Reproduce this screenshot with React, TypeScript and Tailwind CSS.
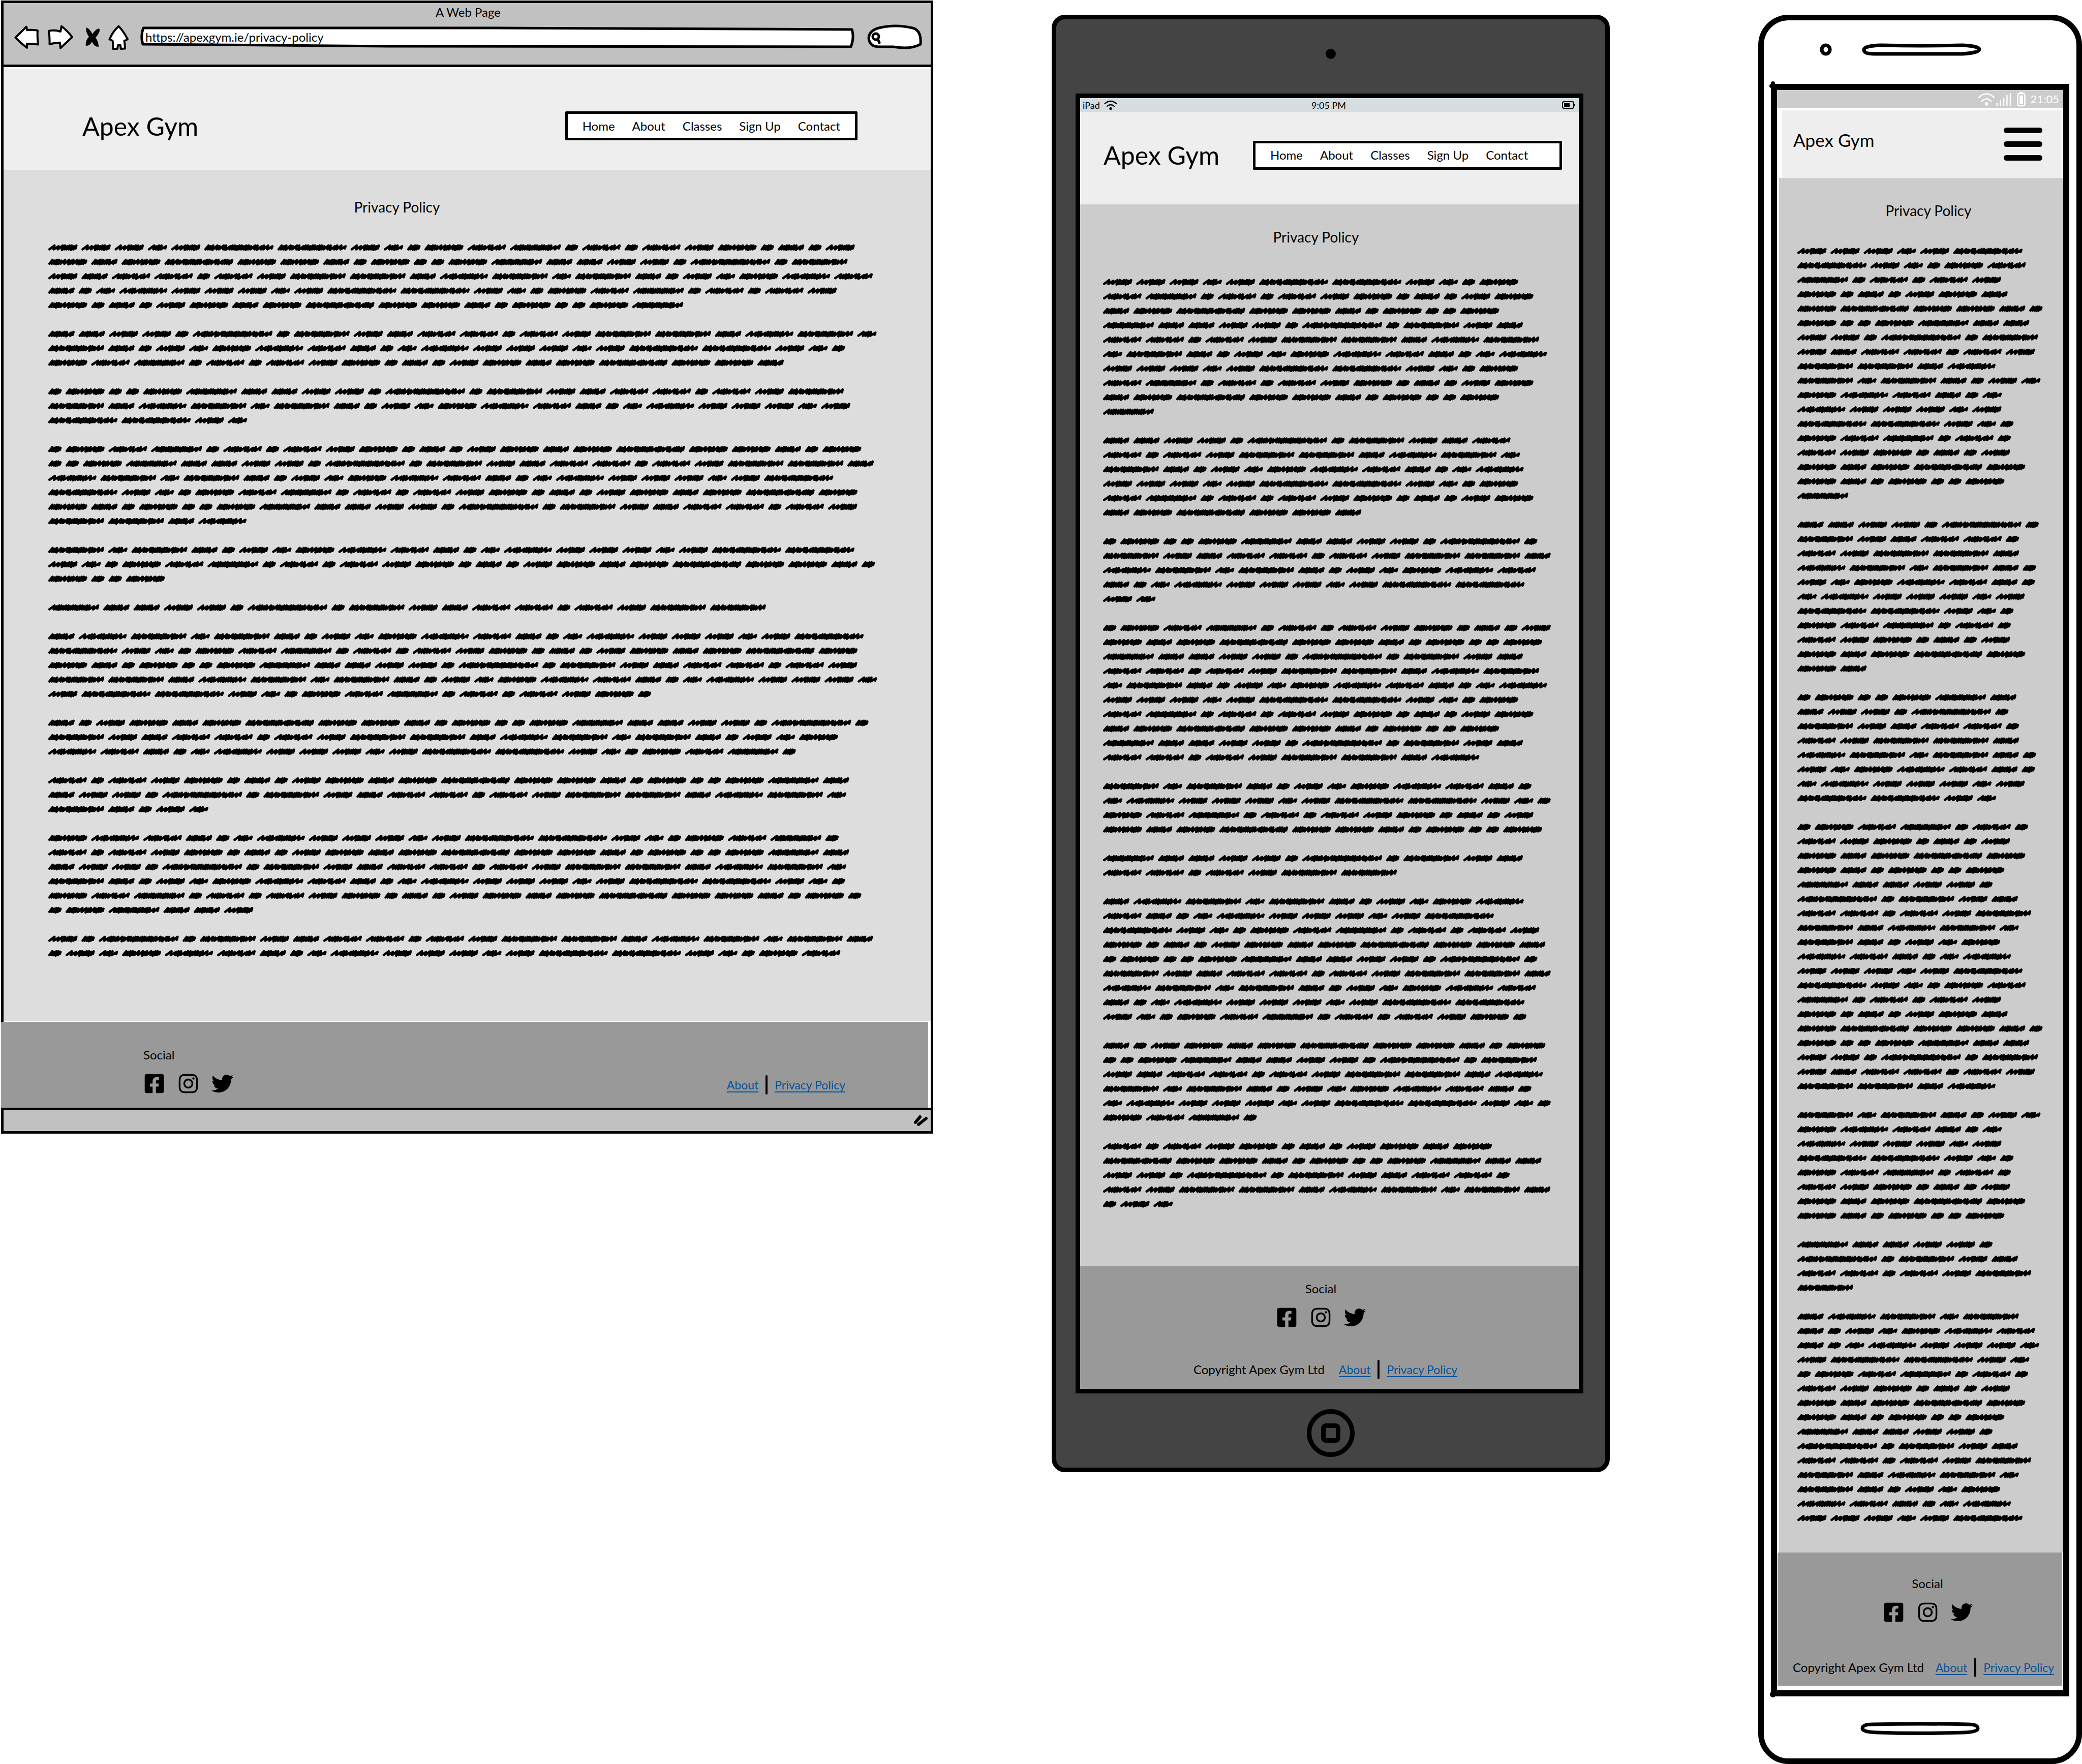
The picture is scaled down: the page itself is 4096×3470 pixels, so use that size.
import React from "react";
import { FaFacebookSquare, FaInstagram, FaTwitter } from "react-icons/fa";

const LOREM =
  "Lorem ipsum dolor sit amet, consectetur adipisicing elit, sed do eiusmod tempor incididunt ut labore et dolore magna aliqua. Ut enim ad minim veniam, quis nostrud exercitation ullamco laboris nisi ut aliquip ex ea commodo consequat. Duis aute irure dolor in reprehenderit in voluptate velit esse cillum dolore eu fugiat nulla pariatur. Excepteur sint occaecat cupidatat non proident, sunt in culpa qui officia deserunt mollit anim id est laborum.".split(
    " ",
  );

// Word index at which each paragraph of the repeated filler text ends.
const PARAGRAPH_ENDS = [105, 168, 216, 331, 380, 398, 503, 566, 614, 729, 771];

// Advance of a scribbled word, space included, by its number of characters.
const ADVANCE: Record<number, number> = {
  2: 38, 3: 51.1, 4: 66.5, 5: 72.8, 6: 93.3, 7: 94.2, 8: 114.3,
  9: 131.4, 10: 120.5, 11: 160.6, 12: 159.8, 13: 184,
};

// Rhythm of each scribble: "o" is a loose stroke, "d" a dense one.
const RHYTHM: Record<number, string> = {
  2: "ddddd",
  3: "odddo",
  4: "dddddddod",
  5: "ooodddddd",
  6: "oddddododo",
  7: "dddddooddodddd",
  8: "ooddodddddddoo",
  9: "dddododdddddddoddoo",
  10: "odddddddddddddddoo",
  11: "dddodododddddddddododoo",
  12: "dddododddddddodddododddd",
  13: "ooddddododdddddddddddododoo",
};

const SPACE = 8.6;
const LINE = 31.6;

function scribble(x: number, y: number, length: number): string {
  const rhythm = RHYTHM[length];
  const ink = ADVANCE[length] - SPACE;
  const weights = rhythm.split("").map((c) => (c === "o" ? 2 : 1.1));
  const total = weights.reduce((a, b) => a + b, 0);
  const unit = (ink - 7) / total;
  let cx = x + 2.6;
  let d = `M${cx.toFixed(1)} ${(y + 3.6).toFixed(1)}`;
  weights.forEach((w, i) => {
    const lift = i % 3 === 1 ? 3 : 4.6;
    const drop = i === weights.length - 1 ? 1.6 : i % 4 === 2 ? 4.9 : 3.7;
    const next = cx + w * unit;
    d += `L${(next + 1.8).toFixed(1)} ${(y - lift).toFixed(1)}L${next.toFixed(1)} ${(y + drop).toFixed(1)}`;
    cx = next;
  });
  return d;
}

function wrap(limit: number, lastWord: number): number[][] {
  const rows: number[][] = [];
  let start = 0;
  for (const end of PARAGRAPH_ENDS) {
    if (start >= lastWord) break;
    if (rows.length) rows.push([]);
    let row: number[] = [];
    let used = 0;
    for (let i = start; i < Math.min(end, lastWord); i++) {
      const length = LOREM[i % LOREM.length].length;
      const advance = ADVANCE[length];
      if (used + advance - SPACE > limit) {
        rows.push(row);
        row = [];
        used = 0;
      }
      row.push(length);
      used += advance;
    }
    rows.push(row);
    start = end;
  }
  return rows;
}

function FillerText({ width, limit, words }: { width: number; limit: number; words: number }) {
  const rows = wrap(limit, words);
  return (
    <svg
      role="img"
      aria-label="Policy text"
      viewBox={`0 0 ${width} ${rows.length * LINE}`}
      className="block h-auto w-full overflow-visible"
      fill="none"
      stroke="#000"
      strokeWidth="5.3"
      strokeLinecap="round"
      strokeLinejoin="round"
    >
      {rows.map((row, r) => {
        let x = 0;
        const d = row
          .map((length) => {
            const word = scribble(x, r * LINE + LINE / 2, length);
            x += ADVANCE[length];
            return word;
          })
          .join("");
        return d ? <path key={r} d={d} /> : null;
      })}
    </svg>
  );
}

const NAV = ["Home", "About", "Classes", "Sign Up", "Contact"];

function Nav({ className }: { className: string }) {
  return (
    <nav
      className={`flex h-[57px] items-center gap-[34px] rounded-xs border-[5px] border-black bg-white px-[29px] text-[24px] leading-[30px] ${className}`}
    >
      {NAV.map((item) => (
        <a key={item} href="#" className="whitespace-nowrap">
          {item}
        </a>
      ))}
    </nav>
  );
}

function Social({ className }: { className: string }) {
  return (
    <div className={`flex flex-col gap-5 ${className}`}>
      <p className="text-[24px] leading-[30px]">Social</p>
      <div className="flex gap-6 text-[43px]">
        <a href="#" aria-label="Facebook" className="flex w-[43px] justify-center">
          <FaFacebookSquare />
        </a>
        <a href="#" aria-label="Instagram" className="flex w-[43px] justify-center">
          <FaInstagram />
        </a>
        <a href="#" aria-label="Twitter" className="flex w-[43px] justify-center">
          <FaTwitter />
        </a>
      </div>
    </div>
  );
}

function FooterLinks() {
  return (
    <div className="flex h-[38px] items-center gap-[14px] text-[23px] leading-[30px] whitespace-nowrap text-[#05549b]">
      <a href="#" className="underline decoration-2 underline-offset-4">
        About
      </a>
      <span className="h-[38px] w-1 rounded-full bg-black" />
      <a href="#" className="underline decoration-2 underline-offset-4">
        Privacy Policy
      </a>
    </div>
  );
}

function BrowserWindow() {
  return (
    <section className="mt-px ml-0.5 flex flex-col border-[5px] border-black bg-white">
      <div className="border-b-[5px] border-black bg-[#c1c1c1] pt-1.5 pr-[17px] pb-[29px] pl-[21px]">
        <p className="text-center text-[24px] leading-6">A Web Page</p>
        <div className="mt-3 flex h-[50px] items-center gap-4">
          <button aria-label="Back">
            <svg viewBox="0 0 49 46" className="block h-[46px] w-[49px]" fill="#fff" stroke="#000" strokeWidth="4" strokeLinejoin="round">
              <path d="M2.5 24 L24 2.500 L25 9 Q36 8 46 10 Q45 24 47 37.500 Q36 36 25 36 L25 44 Q13 35 2.500 24Z" />
            </svg>
          </button>
          <button aria-label="Forward">
            <svg viewBox="0 0 52 48" className="block h-12 w-[52px]" fill="#fff" stroke="#000" strokeWidth="4" strokeLinejoin="round">
              <path d="M3 12 Q13 9 26 13 L28 2.500 Q40 12 49 24 L26 45.500 L25 35 Q14 35 4.500 38 Q5 24 3 12Z" />
            </svg>
          </button>
          <button aria-label="Stop">
            <svg viewBox="0 0 36 38" className="block h-[38px] w-9">
              <path d="M9 0 Q15 2 21 13 Q27 3 34 2 Q37 6 31 15 L27 20 Q33 28 33 38 Q24 38 20 28 Q15 37 8 36 Q6 28 14 18 Q7 9 9 0Z" />
            </svg>
          </button>
          <button aria-label="Home">
            <svg viewBox="0 0 47 49" className="block h-[49px] w-[47px]" fill="#fff" stroke="#000" strokeWidth="4" strokeLinejoin="round">
              <path d="M20.500 2.500 Q31 14 38 28 Q34 31 31.500 31 Q33 40 33 46.500 L24.500 47 L24 40 L19 40 L18 47 L9 47 Q10 40 8.500 31 L2.500 28.500 Q8 14 20.500 2.500Z" />
            </svg>
          </button>
          <label className="relative flex h-10 flex-1 items-center">
            <svg viewBox="0 0 1404 40" preserveAspectRatio="none" className="absolute inset-0 h-full w-full overflow-visible" fill="#fff" stroke="#000" strokeWidth="5" strokeLinejoin="round">
              <path d="M6 2 Q300 3 700 2 Q1100 3 1399 5 Q1404 20 1397 39 Q900 38 500 38 Q250 37 5 34 Q0 18 6 2Z" />
            </svg>
            <input
              type="text"
              aria-label="Address"
              defaultValue="https://apexgym.ie/privacy-policy"
              className="relative w-full bg-transparent pl-[10px] text-[24px] leading-[30px] outline-none"
            />
          </label>
          <label className="relative ml-2.5 flex h-[46px] w-[107px] items-center">
            <svg viewBox="0 0 107 46" className="absolute inset-0 h-full w-full overflow-visible" fill="#fff" stroke="#000" strokeWidth="5" strokeLinejoin="round" strokeLinecap="round">
              <path d="M22 5 Q55 -3 88 5 Q106 9 104 37 Q84 48 50 42 L22 42 Q4 42 2 25 Q3 10 22 5Z" />
              <circle cx="16" cy="22" r="6" />
              <path d="M20 27 L23 34" />
            </svg>
            <input type="search" aria-label="Search" className="relative ml-8 w-16 bg-transparent text-[24px] outline-none" />
          </label>
        </div>
      </div>

      <header className="mt-[3px] flex h-[199px] items-center justify-between bg-[#eeeeee] pt-[26px] pr-[144px] pl-[155px]">
        <h1 className="text-[50px] leading-[60px] whitespace-nowrap">Apex Gym</h1>
        <Nav className="" />
      </header>

      <main className="bg-[#dddddd] pt-[55px] pr-[106px] pb-[118px] pl-[88px]">
        <h2 className="pr-[258px] text-center text-[28px] leading-9">Privacy Policy</h2>
        <div className="mt-12">
          <FillerText width={1818} limit={1820} words={771} />
        </div>
      </main>

      <footer className="mt-0.5 mr-[5px] -ml-[5px] flex items-end justify-between bg-[#999999] pt-[50px] pr-[163px] pb-[26px] pl-[280px]">
        <Social className="items-start" />
        <FooterLinks />
      </footer>
      <div className="flex h-[46px] items-center justify-end border-t-[5px] border-black bg-[#c1c1c1] pr-1.5">
        <svg viewBox="0 0 28 23" className="h-[23px] w-7" stroke="#000" strokeWidth="6" strokeLinecap="round">
          <path d="M4 15 L13 4 M10 19 L25 7" />
        </svg>
      </div>
    </section>
  );
}

function Tablet() {
  return (
    <section className="mt-[29px] flex flex-col rounded-[26px] border-[9px] border-black bg-[#444444] pb-[21px]">
      <div className="mx-auto mt-[58px] mb-[68px] h-5 w-5 rounded-full bg-black" />
      <div className="mr-[43px] ml-[38px] border-[9px] border-black bg-white">
        <div className="grid h-[27px] grid-cols-3 items-center bg-[#d6dde0] pr-2 pl-[5px] text-[18px] leading-6">
          <div className="flex items-center gap-2">
            iPad
            <svg viewBox="0 0 26 20" className="h-5 w-[26px]" fill="none" stroke="#000" strokeWidth="2.200" strokeLinecap="round">
              <path d="M1.500 7 Q13 -3 24.500 7 M6 12 Q13 6 20 12" />
              <circle cx="13" cy="16.500" r="1.500" fill="#000" />
            </svg>
          </div>
          <div className="text-center">9:05 PM</div>
          <svg viewBox="0 0 25 15" className="h-[15px] w-[25px] justify-self-end" fill="none" stroke="#000" strokeWidth="2">
            <rect x="1" y="1" width="22" height="13" rx="3" />
            <path d="M24.200 5V10" />
            <rect x="5" y="5" width="9" height="5" fill="#000" />
          </svg>
        </div>
        <header className="flex h-[182px] items-center justify-between bg-[#eeeeee] pr-[33px] pb-[12px] pl-[46px]">
          <h1 className="text-[50px] leading-[60px] whitespace-nowrap">Apex Gym</h1>
          <Nav className="w-[608px]" />
        </header>
        <main className="bg-[#cccccc] pt-[46px] pr-[50px] pb-[107px] pl-[45px]">
          <h2 className="pr-12 text-center text-[28px] leading-9">Privacy Policy</h2>
          <div className="mt-[57px]">
            <FillerText width={988} limit={985} words={614} />
          </div>
        </main>
        <footer className="flex flex-col items-center gap-[62px] bg-[#999999] pt-[30px] pr-4 pb-[19px]">
          <Social className="items-center pr-[18px]" />
          <div className="flex items-center gap-7">
            <p className="text-[24px] leading-[30px] whitespace-nowrap">Copyright Apex Gym Ltd</p>
            <FooterLinks />
          </div>
        </footer>
      </div>
      <button aria-label="Home button" className="mx-auto mt-[31px] flex h-[94px] w-[94px] items-center justify-center rounded-full border-[9px] border-black">
        <span className="h-[38px] w-[38px] rounded-[9px] border-[9px] border-black" />
      </button>
    </section>
  );
}

function Phone() {
  return (
    <section className="mt-[29px] flex flex-col rounded-[60px] border-[11px] border-black bg-white pb-[46px]">
      <div className="mt-[45px] mb-[55px] flex h-[25px] items-center gap-[59px] pl-[110px]">
        <svg viewBox="0 0 24 25" className="h-[25px] w-6" fill="none" stroke="#000" strokeWidth="7">
          <ellipse cx="12" cy="12.500" rx="8" ry="8.500" />
        </svg>
        <svg viewBox="0 0 235 25" className="h-[25px] w-[235px]" fill="none" stroke="#000" strokeWidth="7">
          <path d="M38 4 Q118 6 198 4 Q231 6 231 12 Q230 19 198 21 L24 21 Q4 21 4 13 Q4 5 38 4Z" />
        </svg>
      </div>
      <div className="relative mx-[14px] border-[12px] border-black bg-white">
        <span className="absolute -top-[17px] -left-[12px] h-4 w-2 rounded-full bg-black" />
        <span className="absolute -top-[12px] -left-[15px] h-2 w-4 rounded-full bg-black" />
        <span className="absolute -bottom-[14px] -left-[14px] h-3 w-3 rounded-full bg-black" />
        <div className="flex h-9 items-center justify-end bg-[#cccccc] pr-2 text-[22px] leading-6 text-white">
          <svg viewBox="0 0 94 30" className="mr-[9px] h-[30px] w-[94px]" fill="none" stroke="#fff" strokeWidth="2.500" strokeLinecap="round">
            <path d="M2 12 Q17 -3 32 12 M8 19 Q17 10 26 19" />
            <circle cx="17" cy="24.500" r="2" fill="#fff" />
            <path d="M38 23V27M44.500 18V27M51 13V27M57.500 8V27M64 4V27" />
            <rect x="78.500" y="4" width="14" height="24" rx="3" />
            <path d="M83 2H88" />
            <path d="M83.500 9V23H87.500V9Z" fill="#fff" />
          </svg>
          21:05
        </div>
        <header className="mt-[3px] mr-[3px] ml-[9px] flex h-[134px] items-center justify-between bg-[#eeeeee] pr-[38px] pl-[23px]">
          <h1 className="pb-4 text-[35px] leading-[42px] whitespace-nowrap">Apex Gym</h1>
          <button aria-label="Menu" className="flex w-[76px] flex-col gap-4">
            <span className="h-[11px] rounded-full bg-black" />
            <span className="h-[11px] rounded-full bg-black" />
            <span className="h-[11px] rounded-full bg-black" />
          </button>
        </header>
        <main className="ml-1 bg-[#cccccc] pt-[46px] pr-[39px] pb-[53px] pl-9">
          <h2 className="pl-8 text-center text-[28px] leading-9">Privacy Policy</h2>
          <div className="mt-12">
            <FillerText width={540} limit={539} words={489} />
          </div>
        </main>
        <footer className="mr-0.5 mb-[9px] ml-px flex flex-col gap-[68px] bg-[#999999] pt-[46px] pr-4 pb-[17px] pl-[30px]">
          <Social className="items-center pl-4" />
          <div className="flex items-center justify-between">
            <p className="text-[24px] leading-[30px] whitespace-nowrap">Copyright Apex Gym Ltd</p>
            <FooterLinks />
          </div>
        </footer>
      </div>
      <svg viewBox="0 0 235 26" className="mx-auto mt-[50px] h-[26px] w-[235px]" fill="none" stroke="#000" strokeWidth="7">
        <path d="M24 5 Q118 3 212 5 Q231 5 231 13 Q231 20 205 21 Q118 24 32 21 Q4 20 4 13 Q4 5 24 5Z" />
      </svg>
    </section>
  );
}

export default function App() {
  return (
    <div className="grid w-full grid-cols-[1836fr_233fr_1098fr_292fr_637fr] items-start overflow-hidden bg-white font-['Lato',sans-serif] text-black">
      <BrowserWindow />
      <div className="col-start-3">
        <Tablet />
      </div>
      <div className="col-start-5">
        <Phone />
      </div>
    </div>
  );
}
